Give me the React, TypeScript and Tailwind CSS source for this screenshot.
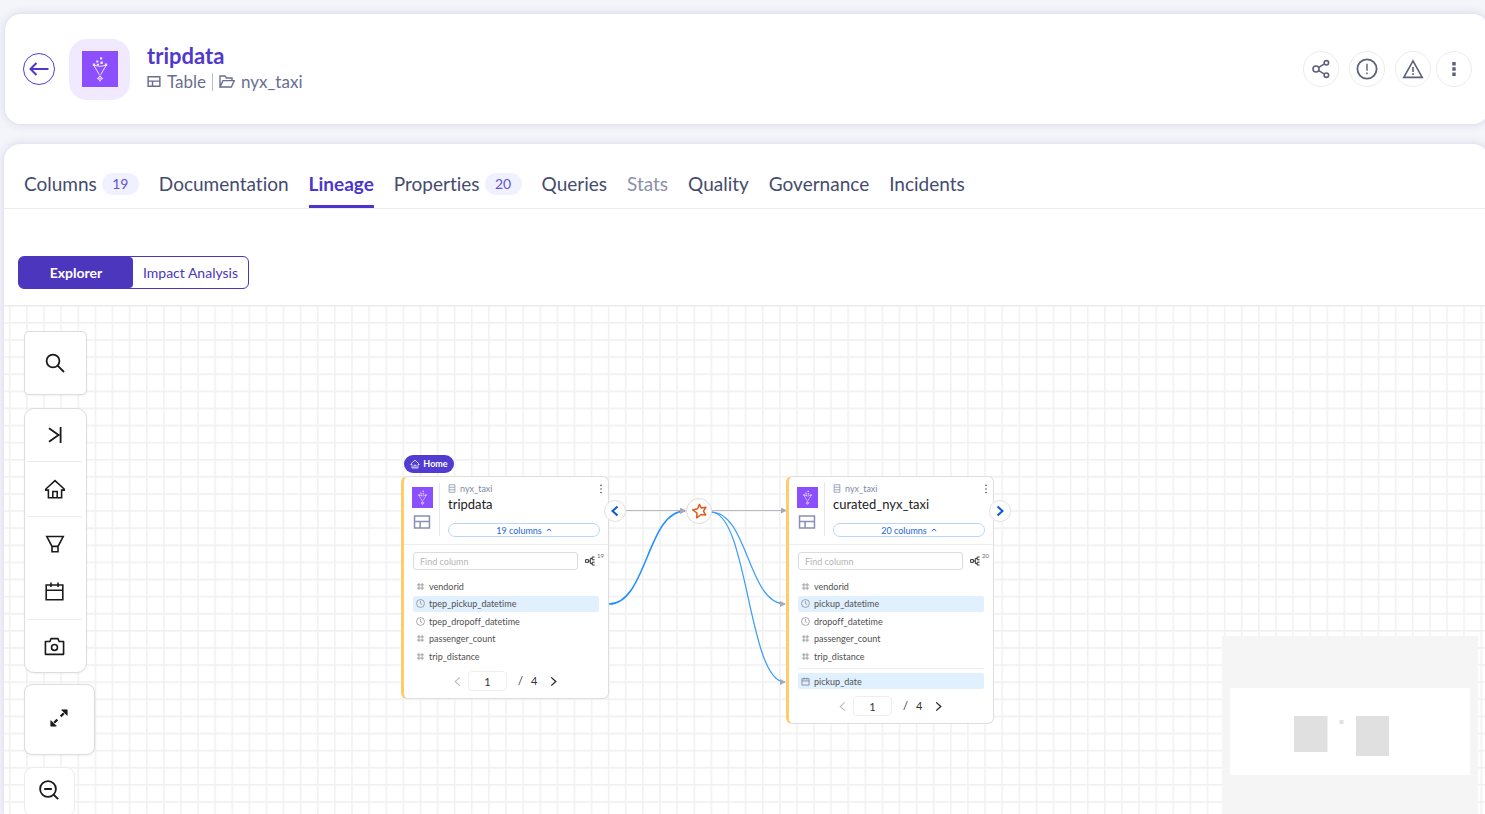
import type { ReactNode } from "react";

type IconProps = { className?: string };

function Svg({ className, box = "0 0 24 24", width = 1.6, children }: IconProps & { box?: string; width?: number; children: ReactNode }) {
  return (
    <svg aria-hidden="true" viewBox={box} className={className} fill="none" stroke="currentColor" strokeWidth={width}>
      {children}
    </svg>
  );
}

function GlueLogo({ className }: IconProps) {
  return (
    <svg aria-hidden="true" viewBox="0 0 36 36" className={className} fill="none" stroke="#efe4ff" strokeWidth="1">
      <rect width="36" height="36" fill="#8c4fff" stroke="none" />
      <path d="M12 14.5 17.2 23.5M24 14.5 18.8 23.5M12.5 14.4Q18 16.4 23.5 14.4" />
      <path d="M10.8 12.6h2.4v2.4h-2.4zM22.8 12.6h2.4v2.4h-2.4zM14.2 9.4h2.2v2.2h-2.2zM18 6.3h2.2v2.2H18zM18.4 10.6h2.4V13h-2.4zM14.8 12.8H17v1.8h-2.2z" fill="#efe4ff" stroke="none" />
      <path d="m18 25 2.4 2.4-2.4 2.4-2.4-2.4z" />
      <path d="M18 23.5v7.3M14.8 27.4h6.4" strokeWidth=".7" />
    </svg>
  );
}

function TableIcon({ className, width = 2 }: IconProps & { width?: number }) {
  return (
    <Svg className={className} box="0 0 18 15" width={width}>
      <path d="M1 1h16v13H1zM1 7h16M7 7v7" />
    </Svg>
  );
}

function HomeIcon({ className, width = 1.7 }: IconProps & { width?: number }) {
  return (
    <Svg className={className} width={width}>
      <path d="M2 13.2V12L12 2.8 22 12v1.2h-2.8v8.4H4.8v-8.4zM9.6 21.4v-6.6h4.8v6.6" />
    </Svg>
  );
}

function CalendarIcon({ className, width = 1.8 }: IconProps & { width?: number }) {
  return (
    <Svg className={className} width={width}>
      <path d="M2.5 4.5h19v17h-19zM2.5 10.5h19M8 1.8v5M16 1.8v5" />
    </Svg>
  );
}

function Chevron({ dir, className, width = 2 }: IconProps & { dir: "left" | "right" | "up"; width?: number }) {
  const paths = { left: "M8.5 1.5 3.5 6l5 4.5", right: "M3.5 1.5 8.5 6l-5 4.5", up: "M1.5 8 6 4l4.5 4" };
  return (
    <Svg className={className} box="0 0 12 12" width={width}>
      <path d={paths[dir]} />
    </Svg>
  );
}

const columnIcons: Record<string, ReactNode> = {
  number: (
    <Svg className="size-[9px] text-[#888]" box="0 0 10 10" width={0.8}>
      <path d="M3.2 1v8M6.8 1v8M1 3.2h8M1 6.8h8" />
    </Svg>
  ),
  time: (
    <Svg className="size-[9px] text-[#777]" box="0 0 10 10" width={0.7}>
      <circle cx="5" cy="5" r="4.4" />
      <path d="M5 2.2V5l1.8 1.3" />
    </Svg>
  ),
  date: <CalendarIcon className="size-[9px] text-[#667]" />,
};

type Column = { name: string; kind: "number" | "time" | "date"; active?: boolean };

function ColumnRow({ name, kind, active }: Column) {
  return (
    <li className={`flex h-4 items-center gap-1 rounded-xs pl-[3px] text-[9px] leading-none text-[#505050] ${active ? "bg-[#e0f0ff]" : ""}`}>
      {columnIcons[kind]}
      {name}
    </li>
  );
}

type TableNodeProps = { title: string; count: number; columns: Column[]; derived?: Column };

function TableNode({ title, count, columns, derived }: TableNodeProps) {
  return (
    <article className="w-[208px] rounded-md border border-l-3 border-[#dedede] border-l-[#ffcb6b] bg-white">
      <div className="flex h-[68px] border-b border-[#eee] pt-[6px] pr-1 pl-2">
        <div className="flex h-[53px] w-7 flex-col gap-[7px] border-r border-[#e6e6ec] pt-1">
          <GlueLogo className="size-[21px]" />
          <TableIcon className="ml-px h-[14px] w-[18px] text-[#8a90b0]" width={1.6} />
        </div>
        <div className="min-w-0 flex-1 pl-2">
          <div className="flex h-[11px] items-center text-[9px] text-[#8188a8]">
            <Svg className="mr-1 h-[9px] w-2" box="0 0 8 10" width={0.8}>
              <path d="M.8.8h6.4v8.4H.8zM.8 3.6h6.4M.8 6.4h6.4" />
            </Svg>
            nyx_taxi
            <button aria-label={`${title} menu`} className="ml-auto pr-px text-[#555]">
              <svg aria-hidden="true" viewBox="0 0 4 10" className="h-[10px] w-1" fill="currentColor">
                <circle cx="2" cy="1.4" r=".8" />
                <circle cx="2" cy="5" r=".8" />
                <circle cx="2" cy="8.6" r=".8" />
              </svg>
            </button>
          </div>
          <h2 className="h-[29px] pt-[2px] text-[13px] leading-4 text-[#222]">{title}</h2>
          <button className="flex h-[14px] w-[152px] items-center justify-center gap-1 rounded-full border border-[#bcd6fb] text-[9px] leading-none text-[#1d67dc]">
            {count} columns
            <Chevron dir="up" className="size-[6px]" />
          </button>
        </div>
      </div>
      <div className="pt-[7px] pr-2 pl-[9px]">
        <div className="flex items-center gap-[7px]">
          <input
            aria-label={`Find column in ${title}`}
            placeholder="Find column"
            className="h-[18px] w-[165px] rounded-[3px] border border-[#dcdcdc] px-[6px] text-[9px] placeholder:text-[#b4b4b4]"
          />
          <button aria-label={`${count} linked columns`} className="flex items-start text-[#333]">
            <Svg className="h-[10px] w-[11px]" box="0 0 11 10" width={1}>
              <path d="M.6 3.6h2.8v2.8H.6zM9.6 1H7.2v2.8h2.4M9.6 6.2H7.2V9h2.4M3.4 5h1.9M7.2 2.4H5.3v5.2h1.9" />
            </Svg>
            <span className="-mt-[3px] ml-px h-0 w-0 text-[6px] leading-[6px] text-[#666]">{count}</span>
          </button>
        </div>
        <ul className="mt-2 flex h-[86px] w-[186px] flex-col justify-between">
          {columns.map((column) => (
            <ColumnRow key={column.name} {...column} />
          ))}
        </ul>
        {derived && (
          <ul className="mt-1 w-[186px] border-t border-[#eee] pt-1">
            <ColumnRow {...derived} />
          </ul>
        )}
      </div>
      <div className="flex items-center pt-[7px] pb-[7px] pl-12 text-[11px] text-[#333]">
        <button aria-label="Previous page" className="text-[#bbb]">
          <Chevron dir="left" className="size-[11px]" width={1.2} />
        </button>
        <input
          aria-label={`${title} page`}
          defaultValue="1"
          className="ml-[5px] h-5 w-[39px] rounded-[4px] border border-[#efefef] text-center"
        />
        <span className="ml-[11px]">/</span>
        <span className="ml-2">4</span>
        <button aria-label="Next page" className="ml-[11px] text-[#222]">
          <Chevron dir="right" className="size-[11px]" width={1.4} />
        </button>
      </div>
    </article>
  );
}

const tabs = [
  { label: "Columns", count: 19 },
  { label: "Documentation" },
  { label: "Lineage", active: true },
  { label: "Properties", count: 20 },
  { label: "Queries" },
  { label: "Stats", muted: true },
  { label: "Quality" },
  { label: "Governance" },
  { label: "Incidents" },
];

const roundButton = "flex size-9 items-center justify-center rounded-full border border-[#ececf0] text-[#5c6078]";
const toolPanel = "border border-[#dcdcdc] bg-white text-[#1a1a1a] shadow-xs";
const toolButton = "flex w-full items-center justify-center";
const nodeToggle = "absolute flex size-[22px] items-center justify-center rounded-full border border-[#e2e2e2] bg-white text-[#0b5bd3]";

export default function App() {
  return (
    <div className="flex h-screen flex-col gap-5 overflow-hidden bg-[#f4f5fa] pt-[14px] pl-1 font-['Lato',sans-serif] [font-variant-ligatures:none]">
      <header className="-mr-1 ml-px flex h-[110px] shrink-0 items-center rounded-2xl bg-white pr-[17px] pl-[18px] shadow-[0_0_8px_rgba(90,90,160,0.22)]">
        <button aria-label="Back" className="flex size-8 items-center justify-center rounded-full border border-[#5140d0] text-[#5038cc]">
          <Svg className="h-4 w-5" box="0 0 20 16" width={2}>
            <path d="M19.5 8H1.5M7.5 2 1.5 8l6 6" />
          </Svg>
        </button>
        <div className="ml-[14px] flex size-[61px] items-center justify-center rounded-[18px] bg-[#f1eafe]">
          <GlueLogo className="size-9" />
        </div>
        <div className="ml-[17px] pb-[3px]">
          <h1 className="text-[22px] leading-7 font-bold text-[#5038cc]">tripdata</h1>
          <div className="flex h-6 items-center text-[17px] text-[#686f91]">
            <TableIcon className="mr-[6px] h-[11px] w-[14px]" />
            Table
            <span className="mx-[6px] h-[18px] w-px bg-[#b9bdce]" />
            <Svg className="mr-[6px] h-[13px] w-4" box="0 0 16 13" width={1.4}>
              <path d="M1 12V1h5l1.4 2H13v2.6M1 12h11.4l2.8-6.4H4L1 12Z" />
            </Svg>
            nyx_taxi
          </div>
        </div>
        <div className="ml-auto flex items-center gap-[10px]">
          <button aria-label="Share" className={roundButton}>
            <Svg className="size-5" box="0 0 20 20" width={1.6}>
              <circle cx="5" cy="10" r="3" />
              <circle cx="15.4" cy="3.8" r="2.2" />
              <circle cx="15.4" cy="16.2" r="2.2" />
              <path d="m7.7 8.4 5.8-3.5M7.7 11.6l5.8 3.5" />
            </Svg>
          </button>
          <button aria-label="Information" className={roundButton}>
            <Svg className="size-[22px]" box="0 0 22 22" width={1.8}>
              <circle cx="11" cy="11" r="9.6" />
              <path d="M11 5.8v7M11 14.4v1.8" strokeWidth="1.4" />
            </Svg>
          </button>
          <button aria-label="Warnings" className={roundButton}>
            <Svg className="size-[22px]" box="0 0 22 22" width={1.6}>
              <path d="M11 2.8 20.2 19.4H1.8zM11 9v5M11 15.2V17" />
            </Svg>
          </button>
          <button aria-label="More actions" className={`${roundButton} -ml-[5px]`}>
            <svg aria-hidden="true" viewBox="0 0 4 16" className="h-4 w-1" fill="currentColor">
              <path d="M.3 1h3.4v3.4H.3zM.3 6.3h3.4v3.4H.3zM.3 11.6h3.4V15H.3z" />
            </svg>
          </button>
        </div>
      </header>

      <main className="-mr-1 flex min-h-0 flex-1 flex-col rounded-t-2xl bg-white shadow-[0_0_8px_rgba(90,90,160,0.22)]">
        <nav className="flex h-[65px] shrink-0 gap-5 border-b border-[#ebebee] pt-4 pl-5 text-[19px] text-[#454b6e]">
          {tabs.map(({ label, count, active, muted }) => (
            <a
              key={label}
              href={`#${label.toLowerCase()}`}
              className={`flex items-center border-b-3 pt-[3px] ${active ? "border-[#4b35cc] font-bold text-[#4b35cc]" : "border-transparent"} ${muted ? "text-[#8b90ab]" : ""}`}
            >
              {label}
              {count && <span className="ml-[5px] flex h-[22px] w-[37px] items-center justify-center rounded-full bg-[#f0f1fe] text-sm text-[#6353d8]">{count}</span>}
            </a>
          ))}
        </nav>

        <div className="flex h-[97px] shrink-0 border-b border-[#ebebee] pt-[47px] pl-[14px]">
          <div className="flex h-[33px] rounded-md border border-[#4c36bd] text-sm text-[#4c36bd]">
            <button className="w-[114px] rounded-[4px] bg-[#4c36bd] font-bold text-white">Explorer</button>
            <button className="w-[115px]">Impact Analysis</button>
          </div>
        </div>

        <section aria-label="Lineage graph" className="relative min-h-0 flex-1 overflow-hidden">
          <svg aria-hidden="true" className="absolute inset-0 size-full" fill="none">
            <defs>
              <pattern id="grid" x="5" y="16" width="17.11" height="17.11" patternUnits="userSpaceOnUse">
                <path d="M.8 0v17.11M0 .8h17.11" stroke="#f1f1f1" strokeWidth="1.5" />
              </pattern>
              <marker id="arrow" viewBox="0 0 6 6" refX="5" refY="3" markerWidth="6" markerHeight="6" markerUnits="userSpaceOnUse" orient="auto">
                <path d="M0 0l6 3-6 3z" fill="#a9a9b3" />
              </marker>
            </defs>
            <rect width="100%" height="100%" fill="url(#grid)" />
            <g stroke="#b8b8bd" strokeWidth="1">
              <path d="M621 204.5h60" markerEnd="url(#arrow)" />
              <path d="M707 204.5h75" markerEnd="url(#arrow)" />
            </g>
            <path d="M605 298C643 298 643 205 681 205" stroke="#1e90ff" strokeWidth="1.5" markerEnd="url(#arrow)" />
            <path d="M707 206C744 206 744 298 781 298" stroke="#3c9dfb" strokeWidth="1.2" markerEnd="url(#arrow)" />
            <path d="M707 206C744 206 744 376 781 376" stroke="#3c9dfb" strokeWidth="1.2" markerEnd="url(#arrow)" />
          </svg>

          <span className="absolute top-[149px] left-[400px] flex h-[18px] w-[50px] items-center justify-center gap-[3px] rounded-full bg-[#523ccf] pb-px text-[9px] font-bold text-white">
            <HomeIcon className="size-[10px]" width={1.8} />
            Home
          </span>
          <div className="absolute top-[170px] left-[397px]">
            <TableNode
              title="tripdata"
              count={19}
              columns={[
                { name: "vendorid", kind: "number" },
                { name: "tpep_pickup_datetime", kind: "time", active: true },
                { name: "tpep_dropoff_datetime", kind: "time" },
                { name: "passenger_count", kind: "number" },
                { name: "trip_distance", kind: "number" },
              ]}
            />
          </div>
          <div className="absolute top-[170px] left-[782px]">
            <TableNode
              title="curated_nyx_taxi"
              count={20}
              columns={[
                { name: "vendorid", kind: "number" },
                { name: "pickup_datetime", kind: "time", active: true },
                { name: "dropoff_datetime", kind: "time" },
                { name: "passenger_count", kind: "number" },
                { name: "trip_distance", kind: "number" },
              ]}
              derived={{ name: "pickup_date", kind: "date", active: true }}
            />
          </div>
          <button aria-label="Collapse downstream" className={`${nodeToggle} top-[194px] left-[600px]`}>
            <Chevron dir="left" className="size-3" />
          </button>
          <button aria-label="Expand downstream" className={`${nodeToggle} top-[194px] left-[985px]`}>
            <Chevron dir="right" className="size-3" />
          </button>
          <button aria-label="Spark job" className="absolute top-[192px] left-[682px] flex size-[26px] items-center justify-center rounded-full border border-[#dcdcdc] bg-white text-[#e25a1c]">
            <Svg className="size-4" box="0 0 16 16" width={1.5}>
              <path d="m8.4 1.4 1.9 3.7 4.6-.9-2.4 4 2.2 3.9-4.6-.6-4.4 3.3.2-4.9L1.6 7l4.9-1.2z" strokeLinejoin="round" />
            </Svg>
          </button>

          <div role="toolbar" aria-label="Graph tools" className="relative flex w-fit flex-col pt-[25px] pl-5">
            <button aria-label="Search" className={`${toolPanel} flex h-16 w-[63px] items-center justify-center rounded-[5px] pr-px pb-px`}>
              <Svg className="size-5" box="0 0 20 20" width={1.8}>
                <circle cx="8" cy="8" r="6.4" />
                <path d="m12.6 12.6 6.4 6.4" />
              </Svg>
            </button>
            <div className={`${toolPanel} mt-[13px] w-[63px] rounded-[10px] pr-1 pl-[2px]`}>
              <button aria-label="Collapse panel" className={`${toolButton} h-[53px] border-b border-[#ececec] pb-px`}>
                <Svg className="size-4" box="0 0 16 16" width={1.8}>
                  <path d="m2 1.2 9.6 6.8L2 14.8M13.6 0v16" />
                </Svg>
              </button>
              <button aria-label="Home" className={`${toolButton} h-[55px] border-b border-[#ececec] pb-px`}>
                <HomeIcon className="size-[22px]" />
              </button>
              <button aria-label="Filter" className={`${toolButton} h-[53px]`}>
                <Svg className="size-5" box="0 0 20 20" width={1.6}>
                  <path d="M1.8 2.5h16.4L13 12.4H7zM7 12.4v5.4h6v-5.4" />
                </Svg>
              </button>
              <button aria-label="Date range" className={`${toolButton} h-[50px] border-b border-[#ececec] pb-[6px]`}>
                <CalendarIcon className="size-[21px]" />
              </button>
              <button aria-label="Snapshot" className={`${toolButton} h-[52px]`}>
                <Svg className="size-[21px]" box="0 0 22 22" width={1.7}>
                  <path d="M1.5 5.8h4.7l1.2-3h7.2l1.2 3h4.7v13.4h-19z" strokeLinejoin="round" />
                  <circle cx="11" cy="12" r="3.1" />
                </Svg>
              </button>
            </div>
            <button aria-label="Full screen" className={`${toolPanel} mt-[11px] flex size-[71px] items-center justify-center rounded-lg pr-[2px] pb-1`}>
              <Svg className="size-[18px]" box="0 0 20 20" width={2.4}>
                <path d="m11.8 8.2 3.6-3.6M8.2 11.8l-3.6 3.6" />
                <path d="M13 1h6v6zM1 13v6h6z" fill="currentColor" stroke="currentColor" strokeWidth="1" />
              </Svg>
            </button>
            <button aria-label="Zoom out" className="mt-3 flex h-[50px] w-[51px] items-center justify-center rounded-[9px] border border-[#ececec] bg-white pr-[2px] pb-1 text-[#1a1a1a]">
              <Svg className="size-5" box="0 0 20 20" width={1.8}>
                <circle cx="9" cy="9" r="7.9" />
                <path d="m14.5 14.5 4.6 4.6M5.2 9h7.6" />
              </Svg>
            </button>
          </div>

          <div className="absolute right-[11px] -bottom-3 h-[190px] w-64 bg-[#f5f5f5]">
            <svg aria-label="Minimap" viewBox="0 0 256 190" className="size-full" fill="#e0e0e0">
              <rect x="8" y="52" width="240" height="87" fill="#fff" />
              <rect x="72" y="80" width="33.5" height="36" />
              <rect x="134" y="80" width="33" height="40" />
              <rect x="117.5" y="84" width="4" height="4" />
            </svg>
          </div>
        </section>
      </main>
    </div>
  );
}
